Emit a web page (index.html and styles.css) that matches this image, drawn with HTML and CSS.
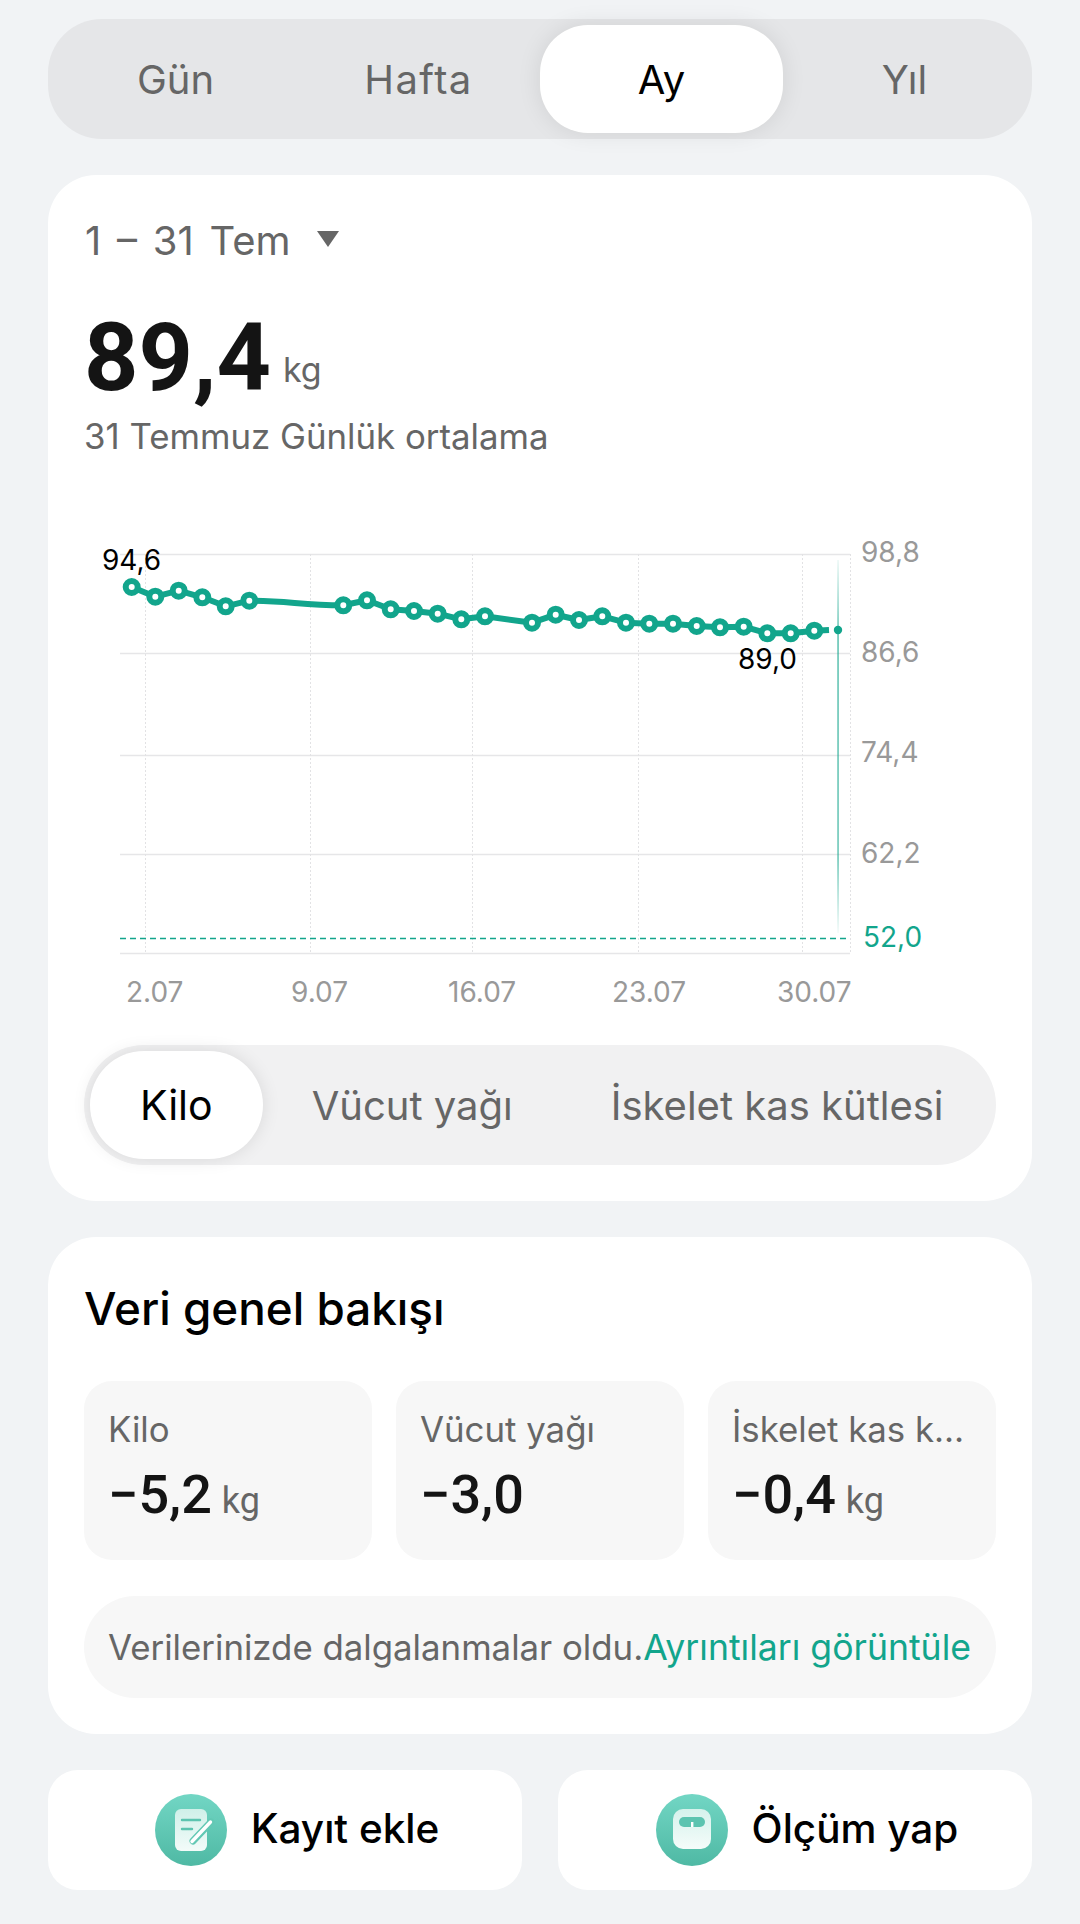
FILE: index.html
```html
<!DOCTYPE html>
<html lang="tr">
<head>
<meta charset="utf-8">
<title>Kilo</title>
<link rel="stylesheet" href="styles.css">
</head>
<body>
<main class="page">
  <nav class="seg">
    <span class="seg-item">Gün</span>
    <span class="seg-item wide">Hafta</span>
    <span class="seg-item active">Ay</span>
    <span class="seg-item">Yıl</span>
  </nav>

  <section class="card chart-card">
    <div class="range"><span class="range-text">1 – 31 Tem</span><span class="caret"></span></div>
    <div class="headline"><span class="big">89,4</span><span class="big-unit">kg</span></div>
    <div class="sub">31 Temmuz Günlük ortalama</div>
    <svg class="chart" width="912" height="500" viewBox="84 520 912 500">
      <defs>
        <linearGradient id="cursor" x1="0" y1="0" x2="0" y2="1">
          <stop offset="0" stop-color="#12a58c" stop-opacity=".08"/>
          <stop offset=".2" stop-color="#12a58c" stop-opacity=".7"/>
          <stop offset=".8" stop-color="#12a58c" stop-opacity=".65"/>
          <stop offset="1" stop-color="#12a58c" stop-opacity=".05"/>
        </linearGradient>
      </defs>
      <g class="grid-h">
        <path d="M120 554.5H850M120 653.5H850M120 755.5H850M120 854.5H850M120 953.5H850"/>
      </g>
      <g class="grid-v">
        <path d="M145.5 554V953M310.5 554V953M472.5 554V953M638.5 554V953M802.5 554V953M850.5 554V953"/>
      </g>
      <path class="limit" d="M120 938.5H848"/>
      <rect class="cursor" x="837.3" y="560" width="1.5" height="373" fill="url(#cursor)"/>
      <path class="line" d="M131.7 587L155.3 596.7L178.7 590.7L202.3 597.3L225.7 606.3L249.3 600.7C290 601 300 605 343.3 605.3L367 600.3L390.7 609.3L414 611L437.7 613.7L461.3 619.3L485 616.3L532 622.7L555.7 614.7L579 620L602.3 616.3L626 622.7L649.3 623.7L673 623.7L696.7 626L720 627.3L743.7 626.7L767.3 633.3L790.7 633.3L814.3 630.7L829 630"/>
      <g class="dots">
        <circle cx="131.7" cy="587" r="6"/><circle cx="155.3" cy="596.7" r="6"/><circle cx="178.7" cy="590.7" r="6"/><circle cx="202.3" cy="597.3" r="6"/><circle cx="225.7" cy="606.3" r="6"/><circle cx="249.3" cy="600.7" r="6"/>
        <circle cx="343.3" cy="605.3" r="6"/><circle cx="367" cy="600.3" r="6"/><circle cx="390.7" cy="609.3" r="6"/><circle cx="414" cy="611" r="6"/><circle cx="437.7" cy="613.7" r="6"/><circle cx="461.3" cy="619.3" r="6"/><circle cx="485" cy="616.3" r="6"/>
        <circle cx="532" cy="622.7" r="6"/><circle cx="555.7" cy="614.7" r="6"/><circle cx="579" cy="620" r="6"/><circle cx="602.3" cy="616.3" r="6"/><circle cx="626" cy="622.7" r="6"/><circle cx="649.3" cy="623.7" r="6"/><circle cx="673" cy="623.7" r="6"/><circle cx="696.7" cy="626" r="6"/><circle cx="720" cy="627.3" r="6"/><circle cx="743.7" cy="626.7" r="6"/><circle cx="767.3" cy="633.3" r="6"/><circle cx="790.7" cy="633.3" r="6"/><circle cx="814.3" cy="630.7" r="6"/>
      </g>
      <circle class="end-dot" cx="838" cy="630" r="4.2"/>
      <text class="t-val" x="102" y="570">94,6</text>
      <text class="t-val" x="738" y="669">89,0</text>
      <g class="t-axis">
        <text x="861" y="562">98,8</text><text x="861" y="662">86,6</text><text x="861" y="762">74,4</text><text x="861" y="863">62,2</text>
        <text class="t-limit" x="863" y="947">52,0</text>
        <text x="126" y="1002">2.07</text><text x="291" y="1002">9.07</text><text x="448" y="1002">16.07</text><text x="612" y="1002">23.07</text><text x="777" y="1002">30.07</text>
      </g>
    </svg>
    <div class="tabs">
      <span class="tab active">Kilo</span>
      <span class="tab">Vücut yağı</span>
      <span class="tab">İskelet kas kütlesi</span>
    </div>
  </section>

  <section class="card over-card">
    <h2 class="title">Veri genel bakışı</h2>
    <div class="stats">
      <div class="stat"><div class="stat-label">Kilo</div><div class="stat-val">−5,2<span class="stat-unit">kg</span></div></div>
      <div class="stat"><div class="stat-label">Vücut yağı</div><div class="stat-val">−3,0</div></div>
      <div class="stat"><div class="stat-label">İskelet kas kütlesi</div><div class="stat-val">−0,4<span class="stat-unit">kg</span></div></div>
    </div>
    <div class="notice">Verilerinizde dalgalanmalar oldu.<span class="link">Ayrıntıları görüntüle</span></div>
  </section>

  <div class="actions">
    <div class="action">
      <svg class="ico" width="72" height="72" viewBox="0 0 72 72">
        <defs>
          <linearGradient id="ci" x1="0" y1="0" x2="0" y2="1"><stop offset="0" stop-color="#72d6c4"/><stop offset="1" stop-color="#4fb9a4"/></linearGradient>
          <linearGradient id="pa" x1="0" y1="0" x2="0" y2="1"><stop offset="0" stop-color="#cff0e9"/><stop offset="1" stop-color="#f3fbf9"/></linearGradient>
        </defs>
        <circle cx="36" cy="36" r="36" fill="url(#ci)"/>
        <rect x="20" y="15" width="32" height="42" rx="6" fill="url(#pa)"/>
        <path d="M27 26H45M27 35H37" stroke="#5cc4b0" stroke-width="2.4" stroke-linecap="round" fill="none"/>
        <path d="M56 28L38 47" stroke="#62c8b4" stroke-width="7" stroke-linecap="round" fill="none"/>
        <path d="M55.5 28L37 47.5" stroke="#fff" stroke-width="3.4" stroke-linecap="round" fill="none"/>
      </svg>
      <span class="action-text">Kayıt ekle</span>
    </div>
    <div class="action">
      <svg class="ico" width="72" height="72" viewBox="0 0 72 72">
        <defs>
          <linearGradient id="ci2" x1="0" y1="0" x2="0" y2="1"><stop offset="0" stop-color="#72d6c4"/><stop offset="1" stop-color="#4fb9a4"/></linearGradient>
          <linearGradient id="pa2" x1="0" y1="0" x2="0" y2="1"><stop offset="0" stop-color="#d5f2ec"/><stop offset="1" stop-color="#f5fcfa"/></linearGradient>
        </defs>
        <circle cx="36" cy="36" r="36" fill="url(#ci2)"/>
        <rect x="17" y="15" width="38" height="40" rx="10" fill="url(#pa2)"/>
        <rect x="23" y="23" width="26" height="10" rx="5" fill="#5cc4b0"/>
        <rect x="35" y="28" width="2.4" height="5" fill="#fff"/>
      </svg>
      <span class="action-text">Ölçüm yap</span>
    </div>
  </div>
</main>
</body>
</html>
```
FILE: styles.css
```css
* { box-sizing: border-box; }
html, body { margin: 0; padding: 0; }
body {
  width: 1080px;
  height: 1924px;
  background: #f1f3f5;
  font-family: Inter, "Noto Sans", sans-serif;
  color: #000;
  overflow: hidden;
}
.page {
  display: flex;
  flex-direction: column;
  gap: 36px;
  padding: 19px 48px 0;
}

.seg {
  display: grid;
  grid-template-columns: repeat(4, 1fr);
  height: 120px;
  padding: 6px;
  background: #e5e6e8;
  border-radius: 54px;
}
.seg-item {
  display: flex;
  align-items: center;
  justify-content: center;
  font-size: 40px;
  color: #666;
}
.seg-item.wide { letter-spacing: 1.4px; }
.seg-item.active {
  background: #fff;
  color: #000;
  border-radius: 48px;
  box-shadow: 0 0 24px rgba(0, 0, 0, .09);
}

.card {
  background: #fff;
  border-radius: 48px;
  padding: 0 36px;
}
.chart-card { height: 1026px; }
.over-card { height: 497px; }

.range {
  display: flex;
  align-items: center;
  gap: 26px;
  height: 48px;
  margin-top: 41px;
  font-size: 40px;
  color: #666;
}
.range-text { word-spacing: 4.5px; margin-left: 1px; }
.caret {
  width: 0;
  height: 0;
  border-left: 11px solid transparent;
  border-right: 11px solid transparent;
  border-top: 16px solid #666;
  margin-top: -3px;
}
.headline {
  height: 100px;
  margin-top: 44px;
  line-height: 100px;
  white-space: nowrap;
}
.big { font-family: Roboto, sans-serif; font-size: 95px; font-weight: 700; color: #141414; }
.big-unit { margin-left: 12px; font-size: 34px; color: #666; vertical-align: 8px; }
.sub { margin-top: 6px; font-size: 34.8px; line-height: 44px; color: #666; }

.chart { display: block; margin-top: 62px; }
.grid-h path { stroke: #e6e6e8; stroke-width: 1.4; fill: none; }
.grid-v path { stroke: #e2e2e4; stroke-width: 1; stroke-dasharray: 2 2; fill: none; }
.limit { stroke: #12a58c; stroke-width: 1.4; stroke-dasharray: 6 4; fill: none; }
.line { stroke: #12a58c; stroke-width: 6; fill: none; stroke-linejoin: round; }
.dots circle { fill: #fff; stroke: #12a58c; stroke-width: 6; }
.end-dot { fill: #12a58c; }
.t-val { font-size: 28px; fill: #000; }
.t-axis text { font-size: 28px; fill: #999; }
.t-axis .t-limit { fill: #12a58c; }

.tabs {
  display: flex;
  height: 120px;
  margin-top: 25px;
  padding: 6px;
  background: #f1f1f2;
  border-radius: 60px;
}
.tab {
  display: flex;
  align-items: center;
  padding: 0 49px;
  font-size: 40px;
  color: #666;
  white-space: nowrap;
}
.tab.active {
  padding: 0 50px;
  background: #fff;
  color: #000;
  font-size: 41px;
  border-radius: 54px;
  box-shadow: 0 0 18px rgba(0, 0, 0, .1);
}

.title {
  margin: 0;
  padding-top: 42px;
  font-size: 45.8px;
  line-height: 60px;
  font-weight: 500;
  color: #000;
}
.stats {
  display: grid;
  grid-template-columns: repeat(3, minmax(0, 1fr));
  gap: 24px;
  margin-top: 42px;
}
.stat {
  min-width: 0;
  height: 179px;
  padding: 24px;
  background: #f7f7f7;
  border-radius: 28px;
}
.stat-label {
  font-size: 34.8px;
  line-height: 48px;
  color: #666;
  white-space: nowrap;
  overflow: hidden;
  text-overflow: ellipsis;
}
.stat-val {
  margin-top: 10px;
  font-family: Roboto, sans-serif;
  font-size: 54px;
  line-height: 64px;
  font-weight: 500;
  color: #141414;
}
.stat-unit { margin-left: 10px; font-size: 36px; font-weight: 400; color: #666; }
.notice {
  display: flex;
  align-items: center;
  height: 102px;
  margin-top: 36px;
  padding: 0 24px;
  background: #f7f7f7;
  border-radius: 51px;
  font-size: 34.8px;
  color: #666;
  white-space: nowrap;
}
.link { color: #12a58c; font-size: 35.6px; }

.actions {
  display: grid;
  grid-template-columns: 1fr 1fr;
  gap: 36px;
}
.action {
  display: flex;
  align-items: center;
  justify-content: center;
  gap: 24px;
  height: 120px;
  padding-left: 24px;
  background: #fff;
  border-radius: 30px;
}
.action-text { font-size: 40.5px; font-weight: 500; color: #000; margin-top: -3px; }
```
